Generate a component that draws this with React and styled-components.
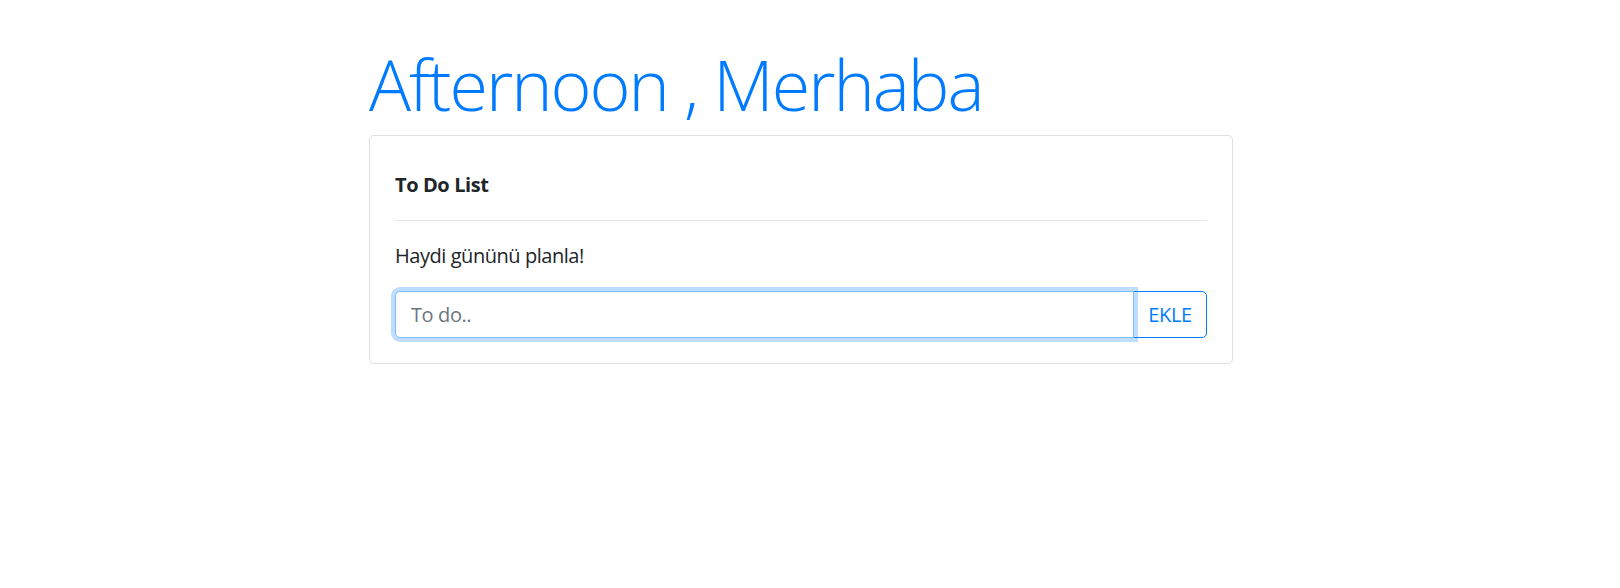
import React from "react"
import styled, { createGlobalStyle } from "styled-components"

const GlobalStyle = createGlobalStyle`
  body {
    margin: 0;
    background: #fff;
    font-family: "Open Sans", "Noto Sans", sans-serif;
    color: #212529;
  }
`

const Page = styled.main`
  padding: 42px 0 0 369px;
`

const Container = styled.div`
  width: 864px;
`

const Greeting = styled.h1`
  margin: 0 0 9px;
  font-size: 70px;
  font-weight: 300;
  line-height: 84px;
  letter-spacing: -2px;
  color: #007bff;
`

const Card = styled.section`
  border: 1px solid rgba(0, 0, 0, 0.125);
  border-radius: 5px;
  padding: 25px;
`

const Title = styled.h5`
  margin: 12px 0 0;
  font-size: 20px;
  font-weight: 700;
  line-height: 24px;
  letter-spacing: -0.4px;
`

const Divider = styled.hr`
  margin: 23px 0 20px;
  border: 0;
  border-top: 1px solid rgba(0, 0, 0, 0.1);
`

const Lead = styled.p`
  margin: 0 0 20px;
  font-size: 20px;
  line-height: 30px;
  letter-spacing: -0.45px;
`

const InputGroup = styled.div`
  display: flex;
  height: 47px;
`

const Input = styled.input`
  position: relative;
  z-index: 3;
  flex: 1;
  min-width: 0;
  padding: 0 15px;
  font: inherit;
  font-size: 20px;
  letter-spacing: -0.4px;
  color: #495057;
  border: 1px solid #80bdff;
  border-radius: 5px 0 0 5px;
  box-shadow: 0 0 0 4px rgba(0, 123, 255, 0.25);
  outline: none;
  &::placeholder {
    color: #6c757d;
  }
`

const Button = styled.button`
  flex: 0 0 74px;
  margin-left: -1px;
  padding: 0;
  font: inherit;
  font-size: 20px;
  letter-spacing: -0.4px;
  color: #007bff;
  background: transparent;
  border: 1px solid #007bff;
  border-radius: 0 5px 5px 0;
  cursor: pointer;
`

const App = () => (
  <Page>
    <GlobalStyle />
    <Container>
      <Greeting>Afternoon , Merhaba</Greeting>
      <Card>
        <Title>To Do List</Title>
        <Divider />
        <Lead>Haydi gününü planla!</Lead>
        <InputGroup>
          <Input placeholder="To do.." autoFocus />
          <Button>EKLE</Button>
        </InputGroup>
      </Card>
    </Container>
  </Page>
)

export default App
